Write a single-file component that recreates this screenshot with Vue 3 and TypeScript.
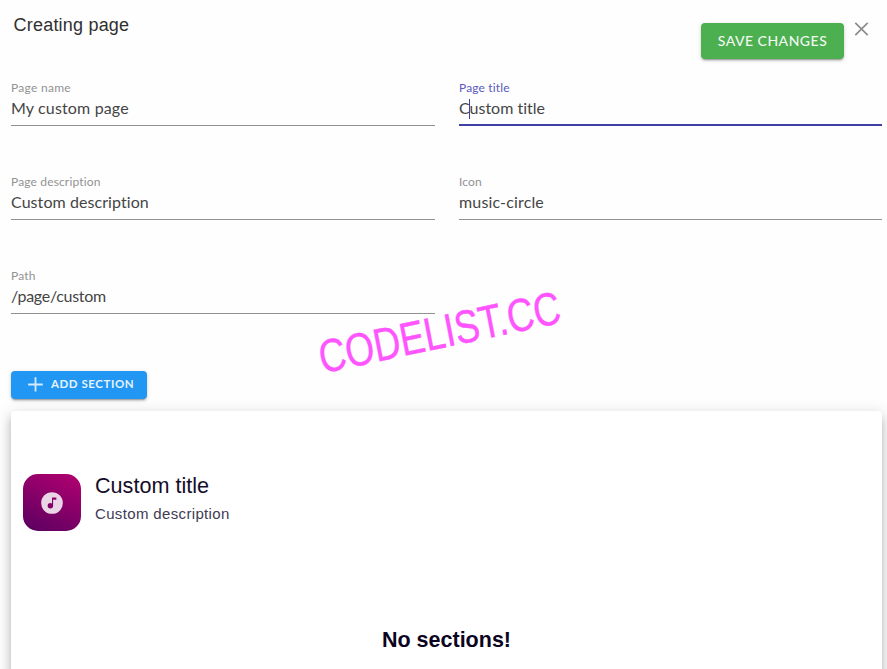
<script setup lang="ts">
interface Field {
  label: string
  value: string
  key: string
  focused?: boolean
}

const fields: Field[] = [
  { key: 'name', label: 'Page name', value: 'My custom page' },
  { key: 'title-field', label: 'Page title', value: 'Custom title', focused: true },
  { key: 'description', label: 'Page description', value: 'Custom description' },
  { key: 'icon', label: 'Icon', value: 'music-circle' },
  { key: 'path', label: 'Path', value: '/page/custom' },
]
</script>

<template>
  <main class="page">
    <header class="header">
      <h1 class="heading">Creating page</h1>
      <button class="save" type="button">SAVE CHANGES</button>
      <button class="close" type="button" aria-label="Close">
        <svg width="24" height="24" viewBox="0 0 24 24">
          <path d="M6.3 5.8 18.7 18.2M18.7 5.8 6.3 18.2" fill="none" stroke="#8c8c8c" stroke-width="1.7" />
        </svg>
      </button>
    </header>

    <form class="fields" @submit.prevent>
      <div v-for="field in fields" :key="field.key" class="field" :class="[field.key, { focused: field.focused }]">
        <span class="label">{{ field.label }}</span>
        <span class="value">{{ field.value }}<i v-if="field.focused" class="caret"></i></span>
      </div>
    </form>

    <button class="add" type="button">
      <svg width="16" height="16" viewBox="0 0 16 16">
        <path d="M8.5 1.2v14.4M1.2 8.5h14.6" fill="none" stroke="#d5eafc" stroke-width="1.8" />
      </svg>
      <span>ADD SECTION</span>
    </button>

    <section class="preview">
      <div class="intro">
        <div class="tile">
          <svg width="26" height="26" viewBox="0 0 24 24">
            <path fill="#ead5e6" d="M16 9V7h-4v5.5c-.42-.31-.93-.5-1.5-.5A2.5 2.5 0 0 0 8 14.5a2.5 2.5 0 0 0 2.5 2.5 2.5 2.5 0 0 0 2.5-2.5V9h3M12 2a10 10 0 0 1 10 10 10 10 0 0 1-10 10A10 10 0 0 1 2 12 10 10 0 0 1 12 2Z" />
          </svg>
        </div>
        <div class="copy">
          <h2 class="title">Custom title</h2>
          <p class="subtitle">Custom description</p>
        </div>
      </div>
      <p class="empty">No sections!</p>
    </section>

    <div class="watermark">CODELIST.CC</div>
  </main>
</template>

<style>
body {
  background: #fefefe;
  overflow: hidden;
}
</style>

<style scoped>
.page {
  position: relative;
  box-sizing: border-box;
  height: 669px;
  padding: 0 5px 0 11px;
  overflow: hidden;
  font-family: Lato, "Liberation Sans", sans-serif;
  font-variant-ligatures: none;
}
h1, h2, p {
  margin: 0;
  font-weight: 400;
}
button {
  border: 0;
  padding: 0;
  background: none;
  font-family: inherit;
}
.header {
  display: flex;
  align-items: flex-start;
  height: 82px;
}
.heading {
  flex: 1;
  padding: 13px 0 0 2.6px;
  font: 400 18px/24px "Liberation Sans", sans-serif;
  letter-spacing: 0.2px;
  color: #303030;
}
.save {
  width: 143px;
  height: 36px;
  margin-top: 23px;
  padding-bottom: 1px;
  border-radius: 4px;
  background: #4caf50;
  color: #f0f8f0;
  font-size: 14px;
  font-weight: 500;
  letter-spacing: 0.5px;
  box-shadow: 0 3px 1px -2px rgba(0, 0, 0, 0.2), 0 2px 2px rgba(0, 0, 0, 0.14), 0 1px 5px rgba(0, 0, 0, 0.12);
}
.close {
  width: 24px;
  height: 24px;
  margin: 17px 9px 0 5px;
}
.close svg {
  display: block;
}
.fields {
  display: grid;
  grid-template-columns: 424px 423px;
  column-gap: 24px;
  grid-auto-rows: 94px;
}
.field {
  box-sizing: border-box;
  display: flex;
  flex-direction: column;
  height: 44px;
  border-bottom: 1px solid #919191;
}
.focused {
  border-bottom: 2px solid #4040a4;
}
.label {
  font-size: 12px;
  line-height: 12px;
  letter-spacing: 0.15px;
  color: #929292;
}
.name .label {
  letter-spacing: 0.28px;
}
.focused .label {
  color: #5959bd;
}
.value {
  position: relative;
  font-size: 16px;
  line-height: 22px;
  padding-top: 3px;
  letter-spacing: 0.15px;
  color: #454545;
}
.title-field .value {
  letter-spacing: 0;
}
.description .value {
  letter-spacing: 0.07px;
}
.path .value {
  letter-spacing: -0.28px;
}
.caret {
  position: absolute;
  left: 10px;
  top: 5px;
  width: 1px;
  height: 20px;
  background: #4040a4;
}
.add {
  display: flex;
  align-items: center;
  box-sizing: border-box;
  width: 136px;
  height: 28px;
  margin-top: 7px;
  padding: 0 0 2px 16px;
  border-radius: 4px;
  background: #2196f3;
  color: #e6f3fe;
  font-size: 11.5px;
  font-weight: 700;
  letter-spacing: 0.55px;
  box-shadow: 0 3px 1px -2px rgba(0, 0, 0, 0.2), 0 2px 2px rgba(0, 0, 0, 0.14), 0 1px 5px rgba(0, 0, 0, 0.12);
}
.add svg {
  margin-right: 8px;
}
.add span {
  padding-bottom: 1px;
}
.preview {
  box-sizing: border-box;
  height: 400px;
  margin-top: 12px;
  padding: 63px 12px 0;
  border-radius: 4px;
  background: #fff;
  box-shadow: 0 5px 5px -3px rgba(0, 0, 0, 0.2), 0 8px 10px 1px rgba(0, 0, 0, 0.14), 0 3px 14px 2px rgba(0, 0, 0, 0.12);
}
.intro {
  display: flex;
  gap: 14px;
  height: 57px;
}
.tile {
  display: flex;
  align-items: center;
  justify-content: center;
  width: 58px;
  height: 57px;
  border-radius: 15px;
  background: linear-gradient(205deg, #af0070 5%, #5d0060 95%);
}
.copy {
  font-family: "Liberation Sans", sans-serif;
}
.title {
  font-size: 21.6px;
  line-height: 24px;
  color: #140d29;
}
.subtitle {
  margin-top: 7px;
  font-size: 15px;
  line-height: 18px;
  letter-spacing: 0.35px;
  color: #413b54;
}
.empty {
  margin-top: 95px;
  text-align: center;
  font: 700 21.5px/28px "Liberation Sans", sans-serif;
  color: #0b0420;
}
.watermark {
  position: absolute;
  left: 291.5px;
  top: 311px;
  width: 250px;
  text-align: center;
  white-space: nowrap;
  font: 400 46.5px/52px "Liberation Sans", sans-serif;
  color: #ff55ff;
  -webkit-text-stroke: 0.4px #ff55ff;
  transform: rotate(-12deg) skewX(-1deg) scaleX(0.8);
}
</style>
